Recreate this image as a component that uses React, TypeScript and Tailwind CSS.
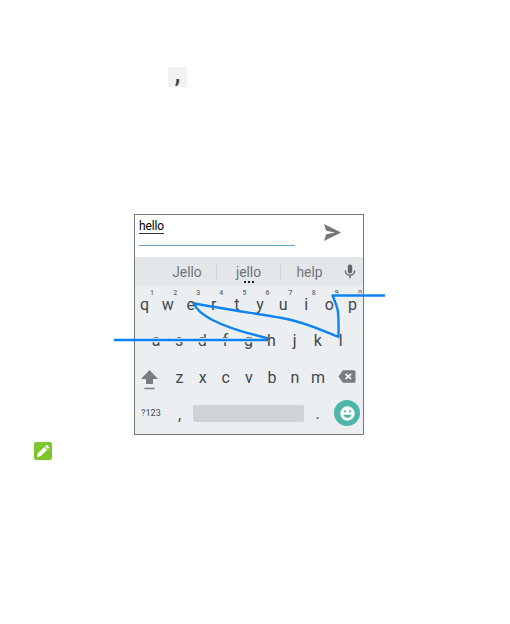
import type { ReactNode } from "react";

const topRow = ["q", "w", "e", "r", "t", "y", "u", "i", "o", "p"];
const middleRow = ["a", "s", "d", "f", "g", "h", "j", "k", "l"];
const bottomRow = ["z", "x", "c", "v", "b", "n", "m"];

function Key({ children, hint }: { children: ReactNode; hint?: number }) {
  return (
    <div className="flex w-[23.1px] shrink-0 flex-col items-center">
      {hint !== undefined && (
        <span className="h-[6px] pl-[15px] text-[7px] font-medium leading-[7px] text-[#61686b]">{hint}</span>
      )}
      <span className="leading-[18px]">{children}</span>
    </div>
  );
}

function MessageBar() {
  return (
    <div className="flex h-[42px] bg-white">
      <div className="ml-1 h-[31px] w-[156px] border-b border-[#5aa5cc] pt-[4px]">
        <span className="block w-[25px] border-b border-[#333] text-[12px] leading-[14px] tracking-[-0.15px] text-black">hello</span>
      </div>
      <svg className="ml-[29px] mt-[9px] h-[17px] w-[17px]" viewBox="0 0 17 17" fill="#777">
        <path d="M0 0 17 8.5 0 17 2.2 10.3 11 8.5 2.2 6.7Z" />
      </svg>
    </div>
  );
}

function Suggestions() {
  return (
    <div className="flex h-[29px] items-center bg-[#e4e7e9] text-[13.8px] text-[#707577]">
      <div className="w-[81px] pl-[23px] pt-[2px] text-center">Jello</div>
      <div className="h-4 w-px bg-[#d2d6d8]" />
      <div className="relative w-[63px] pt-[2px] text-center">
        jello
        <div className="absolute left-[27px] top-[21px] flex gap-[2px]">
          <span className="h-[2px] w-[2px] bg-[#222]" />
          <span className="h-[2px] w-[2px] bg-[#222]" />
          <span className="h-[2px] w-[2px] bg-[#222]" />
        </div>
      </div>
      <div className="h-4 w-px bg-[#d2d6d8]" />
      <div className="w-[57px] pt-[2px] text-center">help</div>
      <svg className="ml-[6px] h-[15px] w-[12px]" viewBox="0 0 12 15">
        <rect x="3.8" y="0.5" width="4.4" height="9" rx="2.2" fill="#60676a" />
        <path d="M1.3 6.5c0 6.4 9.4 6.4 9.4 0M6 11v3.2" fill="none" stroke="#60676a" strokeWidth="1.4" />
      </svg>
    </div>
  );
}

function Keys() {
  return (
    <div className="bg-[#eceff1] text-[16px] text-[#41474a]">
      <div className="-ml-[2px] flex h-[35px] pt-[4px]">
        {topRow.map((letter, i) => (
          <Key key={letter} hint={(i + 1) % 10}>{letter}</Key>
        ))}
      </div>
      <div className="flex h-9 pl-[9.5px] pt-[11px]">
        {middleRow.map((letter) => (
          <Key key={letter}>{letter}</Key>
        ))}
      </div>
      <div className="flex h-[39px] items-center pl-[6px]">
        <svg className="mr-[10px] mt-[6px] h-5 w-[17px]" viewBox="0 0 17 20" fill="#777d80">
          <path d="M8.5 0 17 9H12v5H5V9H0ZM3.5 17.8h10v1.5h-10Z" />
        </svg>
        <div className="flex pt-[2px]">
          {bottomRow.map((letter) => (
            <Key key={letter}>{letter}</Key>
          ))}
        </div>
        <svg className="ml-[8.5px] h-[13px] w-[18px]" viewBox="0 0 18 14" preserveAspectRatio="none">
          <path d="M5 .3H16Q17.5.3 17.5 2v10q0 1.7-1.5 1.7H5L.5 7Z" fill="#777d80" />
          <path d="m7.5 4.2 5.6 5.6m0-5.6L7.5 9.8" stroke="#f4f6f7" strokeWidth="1.7" />
        </svg>
      </div>
      <div className="flex h-[34px] items-center">
        <div className="w-[32px] pt-[2px] text-center text-[9px] tracking-[0.1px]">?123</div>
        <div className="w-[25px] pt-[3px] text-center">,</div>
        <div className="ml-px h-[17px] w-[111px] rounded-[2px] bg-[#cfd3d5]" />
        <div className="w-[27px] pt-[2px] text-center">.</div>
        <div className="ml-[3px] flex h-[26px] w-[26px] items-center justify-center rounded-full bg-[#4db5a9]">
          <svg className="h-[15px] w-[15px]" viewBox="0 0 15 15">
            <circle cx="7.5" cy="7.5" r="7.2" fill="#fff" />
            <circle cx="5" cy="5.4" r="1.1" fill="#4db5a9" />
            <circle cx="10" cy="5.4" r="1.1" fill="#4db5a9" />
            <path d="M3.4 8.7h8.2c-1.1 4.2-7.1 4.2-8.2 0Z" fill="#4db5a9" />
          </svg>
        </div>
      </div>
    </div>
  );
}

// Finger trace through h, e, l and o, with a leader line at each end
function GestureTrace() {
  return (
    <svg className="pointer-events-none absolute left-[-23px] top-[-1px] h-[221px] w-[275px]" viewBox="112 214 275 221" fill="none">
      <path d="M135 340H266" stroke="#eff1f3" strokeWidth="4.4" />
      <path d="M333 295.5H363" stroke="#eff1f3" strokeWidth="4" />
      <g stroke="#0b84f0" strokeWidth="2.4" strokeLinejoin="round">
        <path d="M114 340H268" />
        <path d="M268 338.3C237 331 200 320 194 303.3C222 309 253 313 282 318C305 322 321 330 338.5 337C338.5 328 339 316 337.5 309Q335.5 302 332.5 295.5H385" />
      </g>
    </svg>
  );
}

export default function App() {
  return (
    <main className="flex h-[624px] w-[510px] flex-col items-start bg-white font-['Roboto',sans-serif]">
      <div className="ml-[168px] mt-[67px] flex h-5 w-[19px] justify-center bg-[#f0f2f3] text-[25px] font-medium leading-[14px] text-[#3d4244]">
        ,
      </div>
      <section className="relative ml-[134px] mt-[127px] h-[221px] w-[230px] border border-[#777] bg-[#eceff1]">
        <MessageBar />
        <Suggestions />
        <Keys />
        <GestureTrace />
      </section>
      <div className="ml-[34px] mt-[7px] flex h-[18px] w-[18px] items-center justify-center rounded-[2px] bg-[#7ec62d]">
        <svg className="h-[14px] w-[14px]" viewBox="0 0 14 14" fill="#fff">
          <path d="m1 13 .7-3.6L8.2 3l2.9 2.9-6.5 6.4ZM9 2.2l1-1q.6-.6 1.2 0L12.9 2.9q.6.6 0 1.2l-1 1Z" />
        </svg>
      </div>
    </main>
  );
}
